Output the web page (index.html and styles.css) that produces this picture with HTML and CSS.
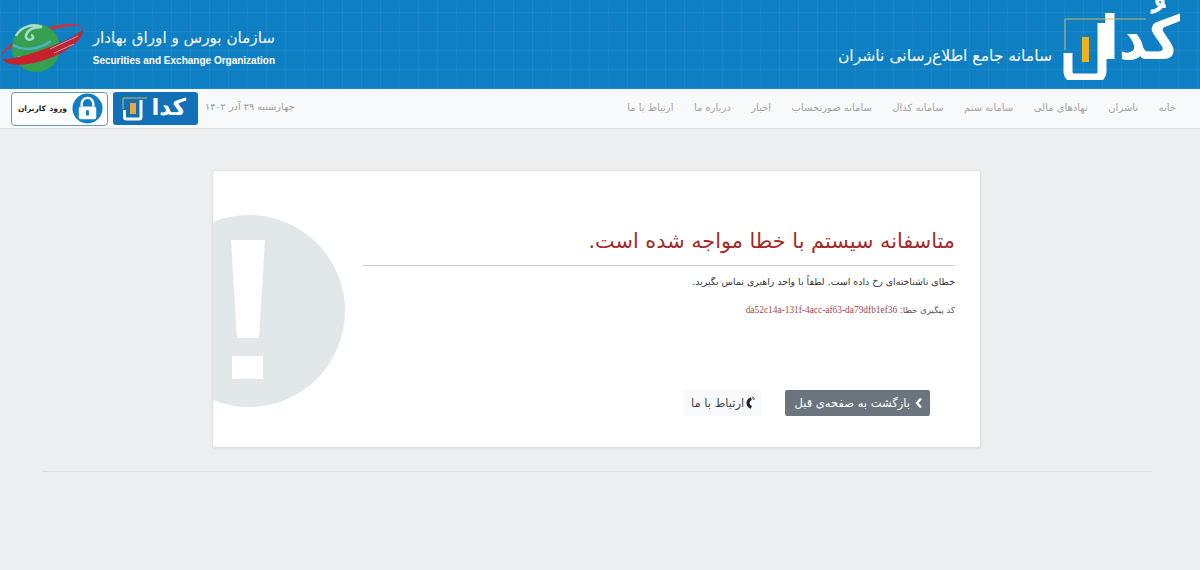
FILE: index.html
```html
<!DOCTYPE html>
<html lang="fa" dir="rtl">
<head>
    <meta charset="UTF-8">
    <title>کدال</title>
    <link rel="stylesheet" href="styles.css">
</head>
<body>
    <header class="top-header">
        <div class="brand">
            <div class="kodal-logo">
                <span class="kodal-text">کُدا</span>
                <svg class="kodal-mark" width="86" height="70" viewBox="0 0 86 70">
                    <path d="M2 9H83M2 9V40" fill="none" stroke="#c9b96a" stroke-width="1"/>
                    <path d="M5 43V62a6 6 0 0 0 6 6H33a6 6 0 0 0 6-6V13" fill="none" stroke="#fff" stroke-width="9"/>
                    <rect x="19" y="27" width="7" height="25" fill="#efb21f"/>
                </svg>
            </div>
            <div class="brand-title">سامانه جامع اطلاع‌رسانی ناشران</div>
        </div>
        <div class="org">
            <div class="org-text">
                <div class="org-fa">سازمان بورس و اوراق بهادار</div>
                <div class="org-en" dir="ltr">Securities and Exchange Organization</div>
            </div>
            <svg class="org-logo" width="86" height="54" viewBox="0 0 86 54">
                <g transform="translate(42 22) rotate(-20)">
                    <path d="M-43 1A43 13 0 0 1 43 -1A41 9 0 0 0 -43 1z" fill="#c8323a"/>
                </g>
                <circle cx="36" cy="27" r="24" fill="#35a04f"/>
                <path d="M16 15c4-9 17-13 26-9-7 0-14 2-16 8-1 4 3 6 6 4 2-1 1-4-1-4" fill="none" stroke="#a9dccb" stroke-width="2.500"/>
                <path d="M13 24c10 6 26 5 38-4M17 36c10 3 22 1 32-6" fill="none" stroke="#4fb0c8" stroke-width="2.500"/>
                <g transform="translate(42 22) rotate(-20)">
                    <path d="M-43 1A43 17 0 0 0 43 -1A40 6 0 0 1 -43 1z" fill="#c8202c"/>
                </g>
                <path d="M50 28 78 15M54 32 74 23" fill="none" stroke="#8fb4d8" stroke-width="1"/>
            </svg>
        </div>
    </header>

    <nav class="main-nav">
        <ul class="nav-links">
            <li>خانه</li>
            <li>ناشران</li>
            <li>نهادهای مالی</li>
            <li>سامانه ستم</li>
            <li>سامانه کدال</li>
            <li>سامانه صورتحساب</li>
            <li>اخبار</li>
            <li>درباره ما</li>
            <li>ارتباط با ما</li>
        </ul>
        <div class="nav-side">
            <span class="nav-date">چهارشنبه ۲۹ آذر ۱۴۰۲</span>
            <div class="mini-logo">
                <span class="mini-text">کدا</span>
                <svg class="mini-mark" width="26" height="24" viewBox="0 0 26 24">
                    <path d="M1 1H25M1 1V12" fill="none" stroke="#c9b96a" stroke-width="1"/>
                    <path d="M2.500 13V20a2 2 0 0 0 2 2H17a2 2 0 0 0 2-2V3" fill="none" stroke="#fff" stroke-width="3"/>
                    <rect x="8" y="6" width="6" height="11" fill="#e9a93a"/>
                </svg>
            </div>
            <a class="login-btn">
                <svg width="31" height="31" viewBox="0 0 32 32">
                    <circle cx="16" cy="16" r="15.500" fill="#0f7fc4"/>
                    <path d="M10 14v-3a6 6 0 0 1 12 0v3" fill="none" stroke="#fff" stroke-width="2.500"/>
                    <rect x="7" y="14" width="18" height="13" rx="2" fill="#fff"/>
                    <rect x="14.500" y="17.500" width="3" height="6" rx="1.500" fill="#0f7fc4"/>
                </svg>
                <span>ورود کاربران</span>
            </a>
        </div>
    </nav>

    <main class="page">
        <section class="error-card">
            <svg class="error-icon" width="134" height="192" viewBox="0 0 134 192">
                <circle cx="36" cy="96" r="96" fill="#e2e8ea"/>
                <polygon points="18,25 52,25 46,123 24,123" fill="#fff"/>
                <rect x="19" y="141" width="31" height="23" fill="#fff"/>
            </svg>
            <div class="error-body">
                <h1>متاسفانه سیستم با خطا مواجه شده است.</h1>
                <p class="error-msg">خطای ناشناخته‌ای رخ داده است. لطفاً با واحد راهبری تماس بگیرید.</p>
                <p class="error-code">کد پیگیری خطا: <span dir="ltr">da52c14a-131f-4acc-af63-da79dfb1ef36</span></p>
                <div class="error-actions">
                    <a class="btn btn-back">
                        <svg width="8" height="12" viewBox="0 0 8 12"><path d="M6 1.500 2 6l4 4.500" fill="none" stroke="#fff" stroke-width="2.400"/></svg>
                        بازگشت به صفحه‌ی قبل
                    </a>
                    <a class="btn btn-contact">
                        <svg width="10" height="14" viewBox="0 0 10 14"><path d="M6 1C0 3.500 0 10.500 6 13L7 10C4 9 4 5 7 4z" fill="#222"/><path d="M7 2a2 2 0 0 1 2 2M7 .5a3.500 3.500 0 0 1 3 3" fill="none" stroke="#555" stroke-width=".8"/></svg>
                        ارتباط با ما
                    </a>
                </div>
            </div>
        </section>
        <hr class="page-rule">
    </main>
</body>
</html>
```

FILE: styles.css
```css
* {
    margin: 0;
    padding: 0;
    box-sizing: border-box;
}
body {
    font-family: "DejaVu Sans", sans-serif;
    background: #eceeef;
    min-height: 100vh;
    color: #333;
}
.top-header {
    height: 89px;
    background-color: #0f7fc4;
    background-image:
        repeating-linear-gradient(90deg, rgba(255, 255, 255, 0.05) 0 1px, transparent 1px 19px),
        repeating-linear-gradient(0deg, rgba(255, 255, 255, 0.05) 0 1px, transparent 1px 19px);
    display: flex;
    justify-content: space-between;
    align-items: stretch;
    padding-right: 20px;
    color: #fff;
}
.brand {
    display: flex;
    align-items: flex-start;
    gap: 11px;
}
.kodal-logo {
    width: 117px;
    height: 78px;
    position: relative;
}
.kodal-text {
    display: block;
    font-size: 60px;
    font-weight: bold;
    line-height: 64px;
    color: #fff;
    margin-top: 6px;
    white-space: nowrap;
    transform: scaleX(0.88);
    transform-origin: right;
}
.kodal-mark {
    position: absolute;
    left: 0;
    top: 10px;
}
.brand-title {
    font-size: 15.6px;
    line-height: 20px;
    margin-top: 46px;
    white-space: nowrap;
}
.org {
    display: flex;
    align-items: flex-start;
    gap: 5px;
}
.org-text {
    margin-top: 27px;
    width: 184px;
    text-align: right;
}
.org-fa {
    font-size: 15.2px;
    line-height: 22px;
    white-space: nowrap;
}
.org-en {
    font-family: "Liberation Sans", sans-serif;
    font-size: 10px;
    font-weight: bold;
    line-height: 12px;
    margin-top: 6px;
    text-align: right;
    white-space: nowrap;
}
.org-logo {
    margin-top: 21px;
}
.main-nav {
    height: 40px;
    background: #f8f9fa;
    border-bottom: 1px solid #dddfe0;
    display: flex;
    justify-content: space-between;
    align-items: center;
    padding: 0 24px 0 11px;
}
.nav-links {
    list-style: none;
    display: flex;
    gap: 20.5px;
    font-size: 10px;
    line-height: 16px;
    margin-top: -2px;
    color: #a3a3a3;
}
.nav-side {
    display: flex;
    align-items: center;
    gap: 5px;
}
.nav-date {
    font-size: 9.7px;
    color: #999;
    margin-left: 2px;
    margin-top: -4px;
}
.mini-logo {
    width: 85px;
    height: 33px;
    background: #1270b8;
    border-radius: 3px;
    position: relative;
    padding-right: 12px;
    color: #fff;
}
.mini-text {
    font-size: 23px;
    font-weight: bold;
    line-height: 30px;
}
.mini-mark {
    position: absolute;
    left: 9px;
    top: 5px;
}
.login-btn {
    width: 97px;
    height: 34px;
    background: #fff;
    border: 1px solid #6b98a6;
    border-radius: 4px;
    display: flex;
    align-items: center;
    gap: 5px;
    padding-right: 4px;
    font-size: 7.5px;
    font-weight: bold;
    word-spacing: 1px;
    color: #222;
    white-space: nowrap;
}
.page {
    padding: 41px 48px 0 42px;
}
.error-card {
    width: 769px;
    height: 278px;
    margin: 0 171px 0 171px;
    background: #fff;
    border: 1px solid #dfe1e2;
    border-radius: 3px;
    box-shadow: 0 1px 2px rgba(0, 0, 0, 0.08);
    position: relative;
    overflow: hidden;
}
.error-icon {
    position: absolute;
    left: 0;
    top: 44px;
}
.error-body {
    width: 592px;
    margin-right: 25px;
    padding-top: 56px;
    position: relative;
}
.error-body h1 {
    font-size: 20.8px;
    font-weight: normal;
    line-height: 28px;
    color: #a52a2a;
    padding-bottom: 10px;
    border-bottom: 1px solid #ccc;
}
.error-msg {
    font-size: 9.400px;
    line-height: 14px;
    margin-top: 9px;
    color: #333;
}
.error-code {
    font-size: 8.500px;
    line-height: 14px;
    margin-top: 14px;
    color: #555;
}
.error-code span {
    font-family: "Liberation Serif", serif;
    font-size: 9.400px;
    color: #a5444a;
}
.error-actions {
    display: flex;
    gap: 23px;
    margin-top: 73px;
    padding-right: 25px;
}
.btn {
    height: 26px;
    display: flex;
    align-items: center;
    gap: 5px;
    font-size: 11.500px;
    border-radius: 2px;
    white-space: nowrap;
}
.btn-back {
    width: 145px;
    padding: 0 7px;
    background: #6c757d;
    color: #fff;
}
.btn-contact {
    width: 78px;
    padding: 0 7px;
    gap: 1px;
    background: #f8f9fa;
    color: #444;
}
.page-rule {
    border: 0;
    border-top: 1px solid #dcdedf;
    margin-top: 23px;
    width: 1110px;
}
```
